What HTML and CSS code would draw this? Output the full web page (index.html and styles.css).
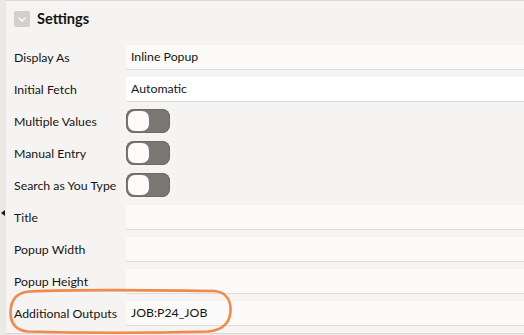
FILE: index.html
```html
<!DOCTYPE html>
<html>
<head>
<meta charset="utf-8">
<link rel="stylesheet" href="styles.css">
</head>
<body>
<div class="page">
  <div class="strip"><span class="splitter-arrow"></span></div>
  <section class="panel">
    <header class="panel-head">
      <span class="chev"><svg width="16" height="16" viewBox="0 0 16 16"><path d="M4.5 6.5 L8 10 L11.5 6.5" fill="none" stroke="#fff" stroke-width="1.3"/></svg></span>
      <h2 class="title">Settings</h2>
    </header>
    <div class="rows">
      <div class="row"><label class="lbl">Display As</label><div class="field">Inline Popup</div></div>
      <div class="row"><label class="lbl">Initial Fetch</label><div class="field white">Automatic</div></div>
      <div class="row"><label class="lbl">Multiple Values</label><span class="toggle"><span class="knob"></span></span></div>
      <div class="row"><label class="lbl">Manual Entry</label><span class="toggle"><span class="knob"></span></span></div>
      <div class="row"><label class="lbl">Search as You Type</label><span class="toggle"><span class="knob"></span></span></div>
      <div class="row"><label class="lbl">Title</label><div class="field"></div></div>
      <div class="row"><label class="lbl">Popup Width</label><div class="field"></div></div>
      <div class="row"><label class="lbl">Popup Height</label><div class="field"></div></div>
      <div class="row"><label class="lbl">Additional Outputs</label><div class="field">JOB:P24_JOB</div></div>
    </div>
  </section>
  <svg class="annot" width="524" height="335" viewBox="0 0 524 335">
    <path d="M30 291.5 C70 289.5 150 290 214 291 C226 292 231 300 230.5 311 C230 322 224 330 208 331.5 C150 333 80 333 28 331.5 C16 330.5 10.5 323 10.5 312 C11 299 17 292 30 291.5 Z" fill="none" stroke="#f0894c" stroke-width="2.6" stroke-linejoin="round"/>
  </svg>
</div>
</body>
</html>
```
FILE: styles.css
```css
* { box-sizing: border-box; margin: 0; padding: 0; }
html, body { width: 524px; height: 335px; overflow: hidden; }
body {
  background: #ebe9e6;
  font-family: Lato, "Open Sans", sans-serif;
  color: #161513;
}
.page {
  position: relative;
  display: flex;
  height: 335px;
}
.strip {
  position: relative;
  width: 6px;
  flex: none;
  background: #ebe9e6;
}
.splitter-arrow {
  position: absolute;
  left: 1px;
  top: 210px;
  width: 0;
  height: 0;
  border-top: 3.5px solid transparent;
  border-bottom: 3.5px solid transparent;
  border-right: 4px solid #1a1816;
}
.panel {
  flex: 1;
  height: 334px;
  background: #f5f4f2;
  border-top: 1px solid #dcd9d6;
  border-bottom: 1px solid #dcd9d6;
  padding-bottom: 4px;
}
.panel-head {
  display: flex;
  align-items: center;
  gap: 7px;
  padding: 9px 0 14px 8px;
  height: 40px;
}
.chev {
  width: 16px;
  height: 16px;
  background: #d3d0cc;
  border-radius: 2px;
  display: flex;
}
.title {
  font-size: 14.6px;
  font-weight: 700;
  line-height: 16px;
}
.rows {
  display: flex;
  flex-direction: column;
}
.row {
  display: flex;
  align-items: center;
  height: 32px;
  padding-left: 8px;
}
.lbl {
  width: 112px;
  flex: none;
  font-size: 12.3px;
}
.field {
  flex: 1;
  height: 24px;
  background: #fbfaf8;
  box-shadow: 0 1px 0 #dedbd8;
  border-radius: 2px 0 0 2px;
  font-size: 12.3px;
  line-height: 24px;
  padding-left: 5px;
}
.field.white { background: #ffffff; }
.toggle {
  width: 44px;
  height: 24px;
  background: #7b7773;
  border-radius: 8px;
  padding: 2px;
  display: flex;
  box-shadow: inset 0 0 0 1px #6e6a66;
}
.knob {
  width: 21px;
  height: 20px;
  background: #fcfbfa;
  border-radius: 7px;
}
.annot {
  position: absolute;
  left: 0;
  top: 0;
  pointer-events: none;
}
```
